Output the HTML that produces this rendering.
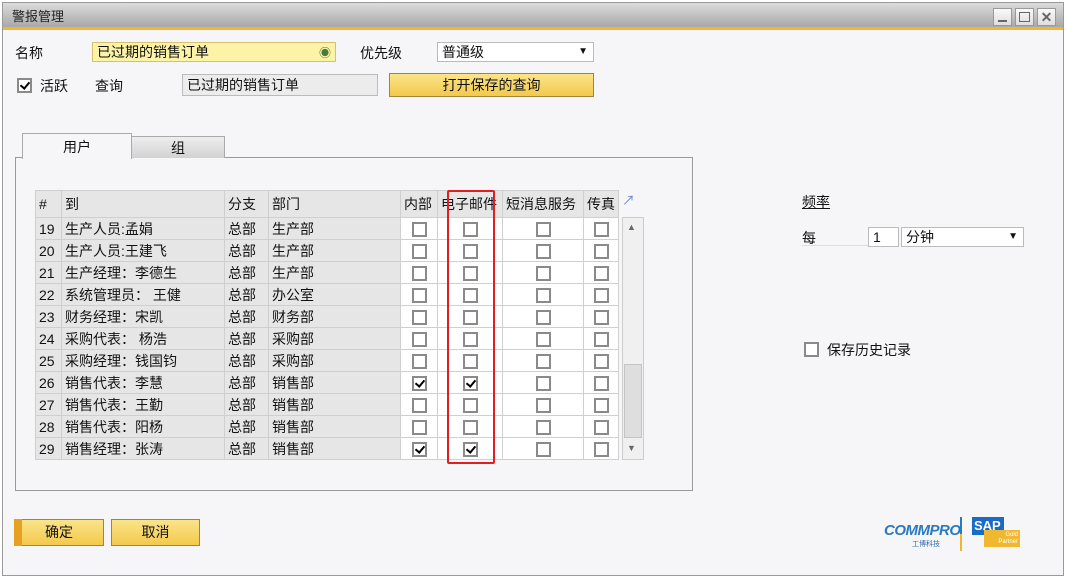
<!DOCTYPE html>
<html><head><meta charset="utf-8"><style>
*{box-sizing:border-box;margin:0;padding:0}
body{width:1068px;height:578px;background:#fff;font-family:"Liberation Sans","Noto Sans CJK SC",sans-serif;font-size:14px;color:#111;position:relative;overflow:hidden}
.win{position:absolute;left:2px;top:2px;width:1062px;height:574px;background:#f6f6f8;border:1px solid #9a9a9a}
.title{position:absolute;left:0;top:0;width:100%;height:27px;background:linear-gradient(#dcdcdc,#a8a8a8);border-bottom:3px solid #f0b830}
.title span{position:absolute;left:9px;top:3px;font-size:13px;color:#222}
.wb{position:absolute;top:5px;width:19px;height:18px;background:linear-gradient(#fafafa,#ddd);border:1px solid #999}
.a{position:absolute}
.lbl{position:absolute;font-size:14px}
.box{position:absolute;border:1px solid #bbb;background:#fff;height:20px;padding-left:4px;line-height:18px}
.btn{position:absolute;background:linear-gradient(#fbe48a,#f3c94c);border:1px solid #a08540;text-align:center;line-height:25px;height:27px}
.cb{display:inline-block;width:15px;height:15px;border:2px solid #8a8a8a;background:#fff;position:relative;vertical-align:middle}
.cb.c:after{content:"";position:absolute;left:3px;top:0px;width:4px;height:7px;border:solid #000;border-width:0 2px 2px 0;transform:rotate(40deg)}
table{position:absolute;left:35px;top:190px;border-collapse:collapse;table-layout:fixed}
td{height:22px;border:1px solid #cfcfcf;padding:0 3px;white-space:nowrap;overflow:hidden;font-size:14px}
td.g{background:#e6e6e6}
td.w{background:#fff;text-align:center}
tr.h td{height:27px;background:#e6e6e6}
</style></head><body>
<div class="win">
 <div class="title"><span>警报管理</span>
  <div class="wb" style="left:990px"><div class="a" style="left:4px;top:11px;width:9px;height:2px;background:#666"></div></div>
  <div class="wb" style="left:1012px"><div class="a" style="left:3px;top:3px;width:11px;height:10px;border:1px solid #666"></div></div>
  <div class="wb" style="left:1034px;text-align:center;line-height:16px;color:#666;font-weight:bold">✕</div>
 </div>
</div>
<div class="lbl" style="left:15px;top:43px">名称</div>
<div class="box" style="left:92px;top:42px;width:244px;background:#fdf3a6;border-color:#d8c070">已过期的销售订单<span style="position:absolute;right:4px;top:1px;color:#4a7a3a;font-size:12px">◉</span></div>
<div class="lbl" style="left:360px;top:43px">优先级</div>
<div class="box" style="left:437px;top:42px;width:157px">普通级<span style="position:absolute;right:5px;top:0;font-size:10px">▼</span></div>
<div class="a" style="left:17px;top:76px"><span class="cb c"></span></div>
<div class="lbl" style="left:40px;top:76px">活跃</div>
<div class="lbl" style="left:95px;top:76px">查询</div>
<div class="box" style="left:182px;top:74px;width:196px;background:#ececec;height:22px;line-height:20px">已过期的销售订单</div>
<div class="btn" style="left:389px;top:73px;width:205px;height:24px;line-height:22px">打开保存的查询</div>

<div class="a" style="left:15px;top:157px;width:678px;height:334px;border:1px solid #9a9a9a;background:#f6f6f8"></div>
<div class="a" style="left:131px;top:136px;width:94px;height:22px;border:1px solid #aaa;border-bottom:none;background:linear-gradient(#eee,#d2d2d2);text-align:center;line-height:22px">组</div>
<div class="a" style="left:22px;top:133px;width:110px;height:26px;border:1px solid #aaa;border-bottom:none;background:#f6f6f8;text-align:center;line-height:26px">用户</div>

<table>
<colgroup><col style="width:26px"><col style="width:163px"><col style="width:44px"><col style="width:132px"><col style="width:37px"><col style="width:65px"><col style="width:81px"><col style="width:35px"></colgroup>
<tr class="h"><td>#</td><td>到</td><td>分支</td><td>部门</td><td>内部</td><td>电子邮件</td><td>短消息服务</td><td>传真</td></tr>
<tr><td class="g">19</td><td class="g">生产人员:孟娟</td><td class="g">总部</td><td class="g">生产部</td><td class="w"><span class="cb"></span></td><td class="w"><span class="cb"></span></td><td class="w"><span class="cb"></span></td><td class="w"><span class="cb"></span></td></tr>
<tr><td class="g">20</td><td class="g">生产人员:王建飞</td><td class="g">总部</td><td class="g">生产部</td><td class="w"><span class="cb"></span></td><td class="w"><span class="cb"></span></td><td class="w"><span class="cb"></span></td><td class="w"><span class="cb"></span></td></tr>
<tr><td class="g">21</td><td class="g">生产经理：李德生</td><td class="g">总部</td><td class="g">生产部</td><td class="w"><span class="cb"></span></td><td class="w"><span class="cb"></span></td><td class="w"><span class="cb"></span></td><td class="w"><span class="cb"></span></td></tr>
<tr><td class="g">22</td><td class="g">系统管理员： 王健</td><td class="g">总部</td><td class="g">办公室</td><td class="w"><span class="cb"></span></td><td class="w"><span class="cb"></span></td><td class="w"><span class="cb"></span></td><td class="w"><span class="cb"></span></td></tr>
<tr><td class="g">23</td><td class="g">财务经理：宋凯</td><td class="g">总部</td><td class="g">财务部</td><td class="w"><span class="cb"></span></td><td class="w"><span class="cb"></span></td><td class="w"><span class="cb"></span></td><td class="w"><span class="cb"></span></td></tr>
<tr><td class="g">24</td><td class="g">采购代表： 杨浩</td><td class="g">总部</td><td class="g">采购部</td><td class="w"><span class="cb"></span></td><td class="w"><span class="cb"></span></td><td class="w"><span class="cb"></span></td><td class="w"><span class="cb"></span></td></tr>
<tr><td class="g">25</td><td class="g">采购经理：钱国钧</td><td class="g">总部</td><td class="g">采购部</td><td class="w"><span class="cb"></span></td><td class="w"><span class="cb"></span></td><td class="w"><span class="cb"></span></td><td class="w"><span class="cb"></span></td></tr>
<tr><td class="g">26</td><td class="g">销售代表：李慧</td><td class="g">总部</td><td class="g">销售部</td><td class="w"><span class="cb c"></span></td><td class="w"><span class="cb c"></span></td><td class="w"><span class="cb"></span></td><td class="w"><span class="cb"></span></td></tr>
<tr><td class="g">27</td><td class="g">销售代表：王勤</td><td class="g">总部</td><td class="g">销售部</td><td class="w"><span class="cb"></span></td><td class="w"><span class="cb"></span></td><td class="w"><span class="cb"></span></td><td class="w"><span class="cb"></span></td></tr>
<tr><td class="g">28</td><td class="g">销售代表：阳杨</td><td class="g">总部</td><td class="g">销售部</td><td class="w"><span class="cb"></span></td><td class="w"><span class="cb"></span></td><td class="w"><span class="cb"></span></td><td class="w"><span class="cb"></span></td></tr>
<tr><td class="g">29</td><td class="g">销售经理：张涛</td><td class="g">总部</td><td class="g">销售部</td><td class="w"><span class="cb c"></span></td><td class="w"><span class="cb c"></span></td><td class="w"><span class="cb"></span></td><td class="w"><span class="cb"></span></td></tr>
</table>
<div class="a" style="left:622px;top:190px;color:#6a8ccc;font-size:13px">↗</div>
<div class="a" style="left:622px;top:217px;width:22px;height:243px;background:#f0f0f0;border:1px solid #ccc"></div>
<div class="a" style="left:624px;top:364px;width:18px;height:74px;background:#dedede;border:1px solid #c4c4c4"></div>
<div class="a" style="left:627px;top:222px;font-size:9px;color:#666">▲</div>
<div class="a" style="left:627px;top:443px;font-size:9px;color:#666">▼</div>
<div class="a" style="left:447px;top:190px;width:48px;height:274px;border:2px solid #e02020;border-radius:2px"></div>

<div class="lbl" style="left:802px;top:192px;text-decoration:underline">频率</div>
<div class="lbl" style="left:802px;top:228px">每</div>
<div class="a" style="left:802px;top:245px;width:68px;border-top:1px solid #ddd"></div>
<div class="box" style="left:868px;top:227px;width:31px">1</div>
<div class="box" style="left:901px;top:227px;width:123px">分钟<span style="position:absolute;right:5px;top:0;font-size:10px">▼</span></div>
<div class="a" style="left:804px;top:340px"><span class="cb"></span></div>
<div class="lbl" style="left:827px;top:340px">保存历史记录</div>

<div class="btn" style="left:14px;top:519px;width:90px">确定</div>
<div class="a" style="left:14px;top:519px;width:8px;height:27px;background:#e8a020"></div>
<div class="btn" style="left:111px;top:519px;width:89px">取消</div>

<div class="a" style="left:884px;top:522px;color:#2a7ac0;font-weight:bold;font-style:italic;font-size:15px;letter-spacing:-0.5px">COMMPRO</div>
<div class="a" style="left:912px;top:539px;color:#2a6ab0;font-size:7px">工博科技</div>
<div class="a" style="left:960px;top:517px;width:2px;height:34px;background:linear-gradient(#2a7ac0 50%,#f0b830 50%)"></div>
<div class="a" style="left:972px;top:517px;width:32px;height:18px;background:#1a6ac8;color:#fff;font-weight:bold;font-size:13px;line-height:18px;padding-left:2px">SAP</div>
<div class="a" style="left:984px;top:530px;width:36px;height:17px;background:#f0b830;color:#fff;font-size:6px;text-align:right;padding:2px 2px 0 0;line-height:7px">Gold<br>Partner</div>
</body></html>
